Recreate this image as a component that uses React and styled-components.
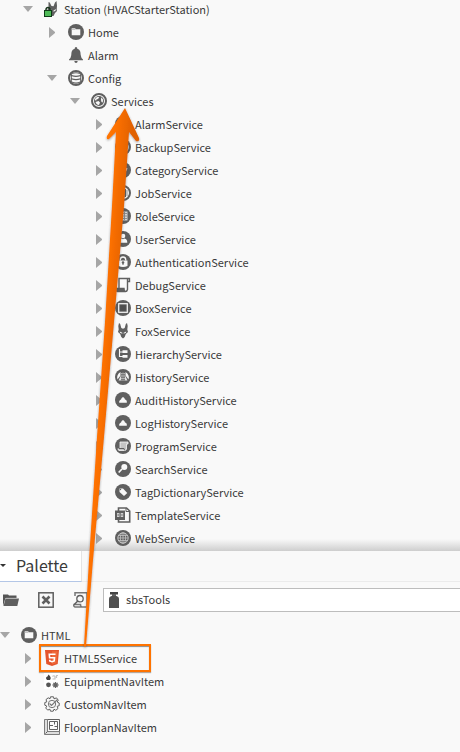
import React, { useState } from "react";
import styled, { createGlobalStyle } from "styled-components";

const INK = "#5f5f5f";
const PALE = "#f8f8f8";
const ORANGE = "#ff7300";
const INDENTS = [0, 23, 47, 70, 94];

const GlobalStyle = createGlobalStyle`
  *, *::before, *::after { box-sizing: border-box; }
  body {
    margin: 0;
    background: #f9f9f9;
    color: #3a3a3a;
    font-family: "Noto Sans CJK SC", "Noto Sans", sans-serif;
    font-size: 11px;
  }
  button, input { font: inherit; color: inherit; }
`;

const Page = styled.main`
  position: relative;
  min-height: 100vh;
  overflow: hidden;
`;

const TreePane = styled.section`
  overflow: hidden;
  padding-bottom: 1px;
  background: linear-gradient(#f9f9f9, #cecece) bottom / 100% 12px no-repeat;
`;

const Tree = styled.ul`
  list-style: none;
  margin: ${(p) => (p.$scrolled ? "-2px 0 0" : "0")};
  padding: 0;
`;

const Row = styled.li`
  display: flex;
  align-items: center;
  height: 23px;
  padding-bottom: 1px;
  padding-left: ${(p) => INDENTS[p.$depth]}px;
`;

const Toggle = styled.button`
  display: flex;
  flex: none;
  align-items: center;
  justify-content: center;
  width: 10px;
  height: 16px;
  margin-right: 11px;
  padding: 0;
  border: 0;
  background: none;
`;

const ToggleGap = styled.span`
  flex: none;
  width: 21px;
`;

const Entry = styled.span`
  position: relative;
  display: flex;
  align-items: center;
  gap: 4px;
  height: 22px;
  line-height: 20px;
  white-space: nowrap;
`;

const Highlight = styled.span`
  position: absolute;
  top: -3px;
  bottom: -3px;
  left: -5px;
  right: -14px;
  border: 2px solid ${ORANGE};
  box-shadow: inset 0 1px 1px #8a8a8a, 0 1px 1px #b5a79c;
`;

const Glyph = styled.svg`
  display: block;
  flex: none;
`;

const TabBar = styled.header`
  display: flex;
  height: 31px;
  border-bottom: 1px solid #ebebeb;
`;

const Tab = styled.div`
  display: flex;
  align-items: center;
  gap: 10px;
  height: 31px;
  padding-right: 13px;
  background: #fff;
  border-right: 1px solid #e4e4e4;
  border-bottom: 1px solid #b3c6e6;
`;

const TabMenu = styled.button`
  display: flex;
  align-items: center;
  width: 6px;
  height: 16px;
  padding: 0;
  border: 0;
  background: none;
`;

const TabTitle = styled.h2`
  margin: 0;
  padding-bottom: 2px;
  font-size: 16px;
  font-weight: 400;
  line-height: 28px;
`;

const Toolbar = styled.div`
  display: flex;
  align-items: center;
  padding: 6px 0 12px 3px;
`;

const ToolButton = styled.button`
  display: flex;
  flex: none;
  align-items: center;
  width: 16px;
  height: 24px;
  margin-right: 19px;
  padding: 0;
  border: 0;
  background: none;
`;

const ModuleField = styled.label`
  display: flex;
  flex: 1;
  align-items: center;
  gap: 4px;
  height: 24px;
  margin-left: -5px;
  padding-left: 2px;
  background: #fff;
  border: 1px solid #bdbdbd;
  border-right: 0;
`;

const ModuleInput = styled.input`
  flex: 1;
  min-width: 0;
  height: 22px;
  padding: 0 0 2px;
  border: 0;
  outline: 0;
  background: none;
`;

const PointerArrow = styled.svg`
  position: absolute;
  top: 0;
  left: 0;
  pointer-events: none;
`;

const Disc = ({ children }) => (
  <>
    <circle cx="8" cy="8" r="8" fill={INK} />
    {children}
  </>
);

const Ring = ({ children }) => (
  <>
    <circle cx="8" cy="8" r="7" fill={PALE} stroke={INK} strokeWidth="2" />
    {children}
  </>
);

const foxHead = "M4 0 L5.200 1 L6.300 5 L8 5.700 L9.700 5 L10.800 1 L12 0 L12.700 3 L12.300 6.500 L13 9 L10.800 11 L9.700 14 L8 15.500 L6.300 14 L5.200 11 L3 9 L3.700 6.500 L3.300 3 Z";
const scroll = "M4 11 V1.500 H14.500 V4.500 H12.500 V12.500 Q12 14.500 10.500 14.500 H2.500 Q.8 14.300 .8 11.500 H9 Q9 14.500 10.500 14.500 M12.500 4.500 V2.500 Q12.700 1.500 13.500 1.500";

const ICONS = {
  station: (
    <>
      <path d="M4.500 1 L5.700 1.500 L7.500 5 L9.500 5.300 L11 1.500 L12.500 0 L13 5 L12.700 8.500 L13 10 L11 12 L9.500 15 H7 L3.500 8.500 L4.500 6 Z" fill={INK} />
      <path d="M9.500 9.500 L12 8 L11.500 9.700 L9.500 10.700 Z M6 8 L7.500 9 V10 Z" fill={PALE} />
      <path d="M2 10 V8.500 Q2.200 6.500 4 6.500 Q5.800 6.500 6 8.500 V10" fill="none" stroke="#16331b" strokeWidth="1.500" />
      <rect x=".5" y="9.500" width="7" height="6" fill="#4fbb58" stroke="#0e3b17" />
    </>
  ),
  folder: (
    <Disc>
      <path d="M3.700 4.300 H7 L8 5.300 H12.300 V11.300 H3.700 Z" fill={PALE} />
      <path d="M3.700 5.300 H7.500" stroke="#b8b8b8" />
    </Disc>
  ),
  bell: (
    <>
      <path d="M8 0 Q9.400 0 9.300 1.700 C12.500 2.700 12.500 5 12.700 8 Q13 11 15 12.500 V13.200 H1 V12.500 Q3 11 3.300 8 C3.500 5 3.500 2.700 6.700 1.700 Q6.600 0 8 0Z" fill={INK} />
      <path d="M6.300 14 H9.700 Q9.500 16 8 16 Q6.500 16 6.300 14Z" fill={INK} />
    </>
  ),
  database: (
    <Ring>
      <path d="M2.800 4 Q8 .5 13.200 4 L13.200 12 Q8 15.500 2.800 12Z" fill={INK} />
      <path d="M3.800 4.200 Q8 2.200 12.200 4.200 V5 Q8 6.600 3.800 5Z M3.800 6.200 Q8 7.800 12.200 6.200 V8.300 Q8 9.900 3.800 8.300Z M3.800 9.500 Q8 11.100 12.200 9.500 V11.500 Q8 13.600 3.800 11.500Z" fill={PALE} />
    </Ring>
  ),
  services: (
    <Ring>
      <circle cx="8" cy="8" r="5" fill={INK} />
      <path d="M3.800 6.500 Q4.500 4.500 7 3.800 L8.300 4.500 L7 6 L5.500 6.500 L5 8Z M4.500 9 L7.500 8 L9 9.500 L8 12 Q5.500 12 4.500 9Z M10.200 4.300 L12 6.500 L11.800 9.500 L10.500 9 L10 7Z" fill={PALE} />
    </Ring>
  ),
  alarm: (
    <Disc>
      <path d="M8 3 Q11 3 11 8 L12.500 11 H3.500 L5 8 Q5 3 8 3Z M7 12 H9 V13 H7Z" fill={PALE} />
    </Disc>
  ),
  backup: (
    <Disc>
      <path d="M8 3 A5 5 0 1 1 3.500 10" fill="none" stroke={PALE} strokeWidth="1.200" />
      <path d="M8 1 V6 L4 3.500Z" fill={PALE} />
    </Disc>
  ),
  category: (
    <Disc>
      <path d="M6 3.500 L12.500 6.500 L10 11.500 L5 9Z" fill={PALE} />
      <circle cx="9" cy="7" r="1.300" fill={INK} />
    </Disc>
  ),
  job: (
    <Ring>
      <path d="M4 4 H11 V12 H4Z" fill={INK} />
      <path d="M9 3.500 V12.500 M12 5 V11" stroke="#a5a5a5" strokeWidth="1.300" />
    </Ring>
  ),
  role: (
    <Disc>
      <path d="M5 3.500 H12.500 V12.500 H5Z" fill="#d5d5d5" />
      <path d="M6 5.500 H12 M6 8 H12 M6 10.500 H12 M9.500 4 V12" stroke="#858585" strokeWidth=".9" />
    </Disc>
  ),
  user: (
    <Disc>
      <circle cx="8" cy="5" r="2.300" fill={PALE} />
      <path d="M3.700 11.800 Q3.700 8 6.500 7.600 L8 8.200 L9.500 7.600 Q12.300 8 12.300 11.800Z" fill={PALE} />
    </Disc>
  ),
  lock: (
    <Disc>
      <path d="M5.300 6.500 V5.500 Q5.500 3 8 3 Q10.500 3 10.700 5.500 V6.500" fill="none" stroke={PALE} strokeWidth="1.400" />
      <path d="M3.500 6.500 H12.500 V12 Q8 14 3.500 12Z" fill={PALE} />
      <circle cx="8" cy="8.500" r="1.300" fill={INK} />
      <path d="M8 9 V11" stroke={INK} />
    </Disc>
  ),
  scroll: (
    <>
      <path d={scroll} fill="none" stroke={INK} strokeWidth="1.400" />
      <path d="M1 11.500 H9 Q9 14 10.500 14.800 H2.500 Q1 14 1 11.500Z" fill={INK} />
    </>
  ),
  box: (
    <Disc>
      <rect x="3.700" y="3.700" width="8.600" height="8.600" fill={INK} stroke={PALE} strokeWidth="1.200" />
      <rect x="5.200" y="5.200" width="5.600" height="5.600" fill="#4f4f4f" />
    </Disc>
  ),
  fox: (
    <>
      <path d={foxHead} fill={INK} />
      <path d="M4.800 8.500 L7.300 9.800 V10.700 L5 9.700Z M11.200 8.500 L8.700 9.800 V10.700 L11 9.700Z" fill={PALE} />
    </>
  ),
  hierarchy: (
    <Disc>
      <path d="M4.500 3 V10.500 H8 M4.500 6 H8" fill="none" stroke={PALE} strokeWidth="1.100" />
      <path d="M7.500 4.300 H12.500 V7 H7.500Z M7.500 9 H12.500 V11.700 H7.500Z" fill={PALE} />
    </Disc>
  ),
  history: (
    <Disc>
      <path d="M5.500 3 V6.500 L2.500 10.500 Q1 6 5.500 3Z M10.500 3 V6.500 L13.500 10.500 Q15 6 10.500 3Z" fill={PALE} />
      <path d="M6 4.500 Q8 3 10 4.500 V6.500 L12.500 11.500 H3.500 L6 6.500Z" fill="#e4e4e4" />
      <path d="M6 5 Q8 3.500 10 5 V11.500 H6Z" fill="#7c7c7c" />
      <path d="M6 7 H10 M6 9.500 H10" stroke="#c0c0c0" strokeWidth=".8" />
    </Disc>
  ),
  cloud: (
    <Disc>
      <path d="M4.200 10.700 V9.200 Q5 7.700 6 7.600 Q6.300 5.500 8 5 Q9.700 5.500 10 7.600 Q11.500 7.800 11.800 9.200 V10.700Z" fill={PALE} />
    </Disc>
  ),
  program: (
    <Disc>
      <path d="M5 4 H13 V6 H11.500 V11 Q11 12.500 9.500 12.500 H4 Q3 12.300 3 10.500 H5Z" fill="#c4c4c4" stroke={PALE} strokeWidth=".8" />
      <path d="M3.500 10.500 H9 Q9 12 10 12" fill="none" stroke={INK} />
    </Disc>
  ),
  search: (
    <Disc>
      <circle cx="9.300" cy="6" r="3" fill={PALE} />
      <path d="M7 8 L3.700 11.500" stroke={PALE} strokeWidth="1.700" />
    </Disc>
  ),
  tag: (
    <Disc>
      <path d="M4.500 4.500 L8 4.500 L12.300 9 L9 12 L4.500 8Z" fill={PALE} />
      <circle cx="5.500" cy="5.500" r=".7" fill={INK} />
    </Disc>
  ),
  template: (
    <>
      <path d="M3.500 4 V1 H11.500 L14.700 4 V15 H3.500 V13" fill={PALE} stroke={INK} strokeWidth="1.600" />
      <path d="M11 1 V4.500 H14.500" fill="none" stroke={INK} />
      <rect x="0" y="3.500" width="10" height="9.500" fill={INK} />
      <path d="M2 6 H4.500 V10 H2Z M5.700 6 H8.200 V10 H5.700Z" fill="#d0d0d0" />
      <path d="M2.500 8 H4 M6.200 8 H7.700" stroke={INK} />
    </>
  ),
  web: (
    <Disc>
      <circle cx="8" cy="8" r="5.200" fill="none" stroke="#c4c4c4" />
      <ellipse cx="8" cy="8" rx="2.600" ry="5.200" fill="none" stroke="#c4c4c4" strokeWidth=".8" />
      <path d="M8 3 V13 M3 8 H13 M4 5.500 H12 M4 10.500 H12" stroke="#c4c4c4" strokeWidth=".8" />
    </Disc>
  ),
  html5: (
    <>
      <path d="M1 0 H15 L13.700 14 L8 16 L2.300 14Z" fill="#e4552d" />
      <path d="M8 1.300 H13.600 L12.500 13 L8 14.600Z" fill="#ef6a3a" />
      <path d="M11.500 4.200 H5.300 L5.600 7.700 H10.500 L10.200 11 L8 11.700 L5.800 11 L5.700 9.700" fill="none" stroke="#fff" strokeWidth="1.600" />
    </>
  ),
  equipment: (
    <>
      <rect width="16" height="16" fill="#fff" />
      <path d="M4.500 1.500 Q8 4.500 6 7 H3 Q.8 4.500 3.500 3.500Z" fill="#444" />
      <path d="M8.500 3.500 Q10 2 11 3.500 V6 H8.500 M12.500 5 V2.500 H14" fill="none" stroke="#c2c2c2" strokeWidth="1.200" />
      <circle cx="4.500" cy="11.800" r="2.400" fill="#555" />
      <path d="M11.500 9 V15 M8.500 12 H14.500 M9.400 9.900 L13.600 14.100 M13.600 9.900 L9.400 14.100" stroke="#666" strokeWidth="1.300" />
    </>
  ),
  gear: (
    <>
      <path d="M6.500 .8 H9.500 L10 2.800 L12.500 1.900 L14.300 4.200 L13.200 6 L15.200 7 V9.700 L13.200 10.300 L14 12.500 L11.800 14.300 L10 13.200 L9.200 15.200 H6.500 L5.900 13.200 L3.700 14.100 L1.700 12 L2.800 10.100 L.8 9.200 V6.500 L2.800 5.900 L2 3.600 L4.200 1.800 L6 2.800Z" fill={PALE} stroke={INK} />
      <circle cx="8" cy="8" r="3.700" fill="none" stroke="#777" />
      <path d="M5.500 7.500 L7.500 9.500 L13.500 3.500" fill="none" stroke="#777" strokeWidth="1.200" />
    </>
  ),
  floorplan: (
    <>
      <path d="M.5 .5 H3.500 V12.500 H15.500 V15.500 H.5Z" fill="#ddd" stroke={INK} strokeWidth=".8" />
      <path d="M3.500 .5 H15.500 V12.500 M5.500 2.500 H13.500 V10.500 H5.500Z M5.500 6.500 H9 M10.500 3 V5.500 M10.500 7.500 H13" fill="none" stroke={INK} />
      <path d="M1.500 14.500 L3.500 12.500" stroke={INK} />
    </>
  ),
  open: (
    <>
      <path d="M0 14 V2.500 H5 L6 3.500 H13.500 V6 H2.500Z" fill="#555" />
      <path d="M2.500 6.500 H16 L14.300 14 H.5Z" fill={INK} />
      <path d="M3 6.200 H15" stroke="#bbb" strokeWidth=".5" />
    </>
  ),
  close: (
    <>
      <rect x=".8" y=".8" width="14.400" height="14.400" fill={PALE} stroke={INK} strokeWidth="1.500" />
      <path d="M4.500 4.500 L11.500 11.500 M11.500 4.500 L4.500 11.500" stroke={INK} strokeWidth="2.600" />
    </>
  ),
  preview: (
    <>
      <path d="M2 4 V.8 H14 V15 H8 M.5 12.500 H7.500 Q7.500 15 9 15 H2 Q.5 14.500 .5 12.500" fill="none" stroke="#777" strokeWidth="1.500" />
      <circle cx="7" cy="6.700" r="3.200" fill={PALE} stroke={INK} strokeWidth="1.300" />
      <path d="M4.800 9 L1 12.800" stroke={INK} strokeWidth="1.500" />
    </>
  ),
  module: (
    <>
      <path d="M4 0 H12 V2.500 H4Z" fill="#444" />
      <path d="M6 2 H10 V4.500 H6Z" fill={INK} />
      <path d="M5.500 4 H10.500 Q13 4.500 13 6.500 V16 H3 V6.500 Q3 4.500 5.500 4Z" fill="#505050" />
    </>
  ),
};

const Icon = ({ name }) => (
  <Glyph width="16" height="16" viewBox="0 0 16 16" aria-hidden="true">
    {ICONS[name]}
  </Glyph>
);

const STATION = [
  [1, "station", "Station (HVACStarterStation)", "open"],
  [2, "folder", "Home", "closed"],
  [2, "bell", "Alarm", null],
  [2, "database", "Config", "open"],
  [3, "services", "Services", "open"],
  [4, "alarm", "AlarmService", "closed"],
  [4, "backup", "BackupService", "closed"],
  [4, "category", "CategoryService", "closed"],
  [4, "job", "JobService", "closed"],
  [4, "role", "RoleService", "closed"],
  [4, "user", "UserService", "closed"],
  [4, "lock", "AuthenticationService", "closed"],
  [4, "scroll", "DebugService", "closed"],
  [4, "box", "BoxService", "closed"],
  [4, "fox", "FoxService", "closed"],
  [4, "hierarchy", "HierarchyService", "closed"],
  [4, "history", "HistoryService", "closed"],
  [4, "cloud", "AuditHistoryService", "closed"],
  [4, "cloud", "LogHistoryService", "closed"],
  [4, "program", "ProgramService", "closed"],
  [4, "search", "SearchService", "closed"],
  [4, "tag", "TagDictionaryService", "closed"],
  [4, "template", "TemplateService", "closed"],
  [4, "web", "WebService", "closed"],
];

const PALETTE = [
  [0, "folder", "HTML", "open"],
  [1, "html5", "HTML5Service", "closed", true],
  [1, "equipment", "EquipmentNavItem", "closed"],
  [1, "gear", "CustomNavItem", "closed"],
  [1, "floorplan", "FloorplanNavItem", "closed"],
];

const TreeRow = ({ item: [depth, icon, label, state, marked] }) => (
  <Row
    $depth={depth}
    role="treeitem"
    aria-level={depth + 1}
    aria-expanded={state ? state === "open" : undefined}
  >
    {state ? (
      <Toggle type="button" aria-label={`Toggle ${label}`}>
        <Glyph width="10" height="12" viewBox="0 0 10 12">
          <path d={state === "open" ? "M0 3 H10 L5 9Z" : "M2 1 L8 6 V7 L2 12Z"} fill="#a6a6a6" />
        </Glyph>
      </Toggle>
    ) : (
      <ToggleGap />
    )}
    <Entry>
      <Icon name={icon} />
      {label}
      {marked && <Highlight />}
    </Entry>
  </Row>
);

export default function App() {
  const [moduleName, setModuleName] = useState("sbsTools");
  return (
    <Page>
      <GlobalStyle />
      <TreePane>
        <Tree $scrolled role="tree" aria-label="Station">
          {STATION.map((item) => (
            <TreeRow key={item[2]} item={item} />
          ))}
        </Tree>
      </TreePane>
      <section>
        <TabBar>
          <Tab>
            <TabMenu type="button" aria-label="Side bar menu">
              <Glyph width="6" height="4" viewBox="0 0 6 4">
                <path d="M0 0 H6 L3 3Z" fill="#333" />
              </Glyph>
            </TabMenu>
            <TabTitle>Palette</TabTitle>
          </Tab>
        </TabBar>
        <Toolbar>
          <ToolButton type="button" aria-label="Open palette">
            <Icon name="open" />
          </ToolButton>
          <ToolButton type="button" aria-label="Close palette">
            <Icon name="close" />
          </ToolButton>
          <ToolButton type="button" aria-label="Preview">
            <Icon name="preview" />
          </ToolButton>
          <ModuleField>
            <Icon name="module" />
            <ModuleInput
              aria-label="Module"
              value={moduleName}
              onChange={(e) => setModuleName(e.target.value)}
            />
          </ModuleField>
        </Toolbar>
        <Tree role="tree" aria-label="Palette">
          {PALETTE.map((item) => (
            <TreeRow key={item[2]} item={item} />
          ))}
        </Tree>
      </section>
      <PointerArrow width="160" height="660" viewBox="0 0 160 660" aria-hidden="true">
        <defs>
          <linearGradient id="shaft" x1="104" x2="140" y1="0" y2="2" gradientUnits="userSpaceOnUse">
            <stop offset="0" stopColor="#ff7a08" />
            <stop offset=".5" stopColor="#ff7200" />
            <stop offset="1" stopColor="#e06000" />
          </linearGradient>
          <filter id="shade" x="-20%" y="-5%" width="140%" height="110%">
            <feDropShadow dx="0" dy="1" stdDeviation="1" floodColor="#333" floodOpacity=".45" />
          </filter>
        </defs>
        <path
          d="M125 108 L139 138 Q140 142 136 141 L129 132 L124 206 L114 322 L104 437 L93 560 L86 646 Q85 648 84 646 L89 560 L97 437 L105 322 L112 206 L116 132 L109 139 Q106 140 107 136 Z"
          fill="url(#shaft)"
          filter="url(#shade)"
        />
      </PointerArrow>
    </Page>
  );
}
